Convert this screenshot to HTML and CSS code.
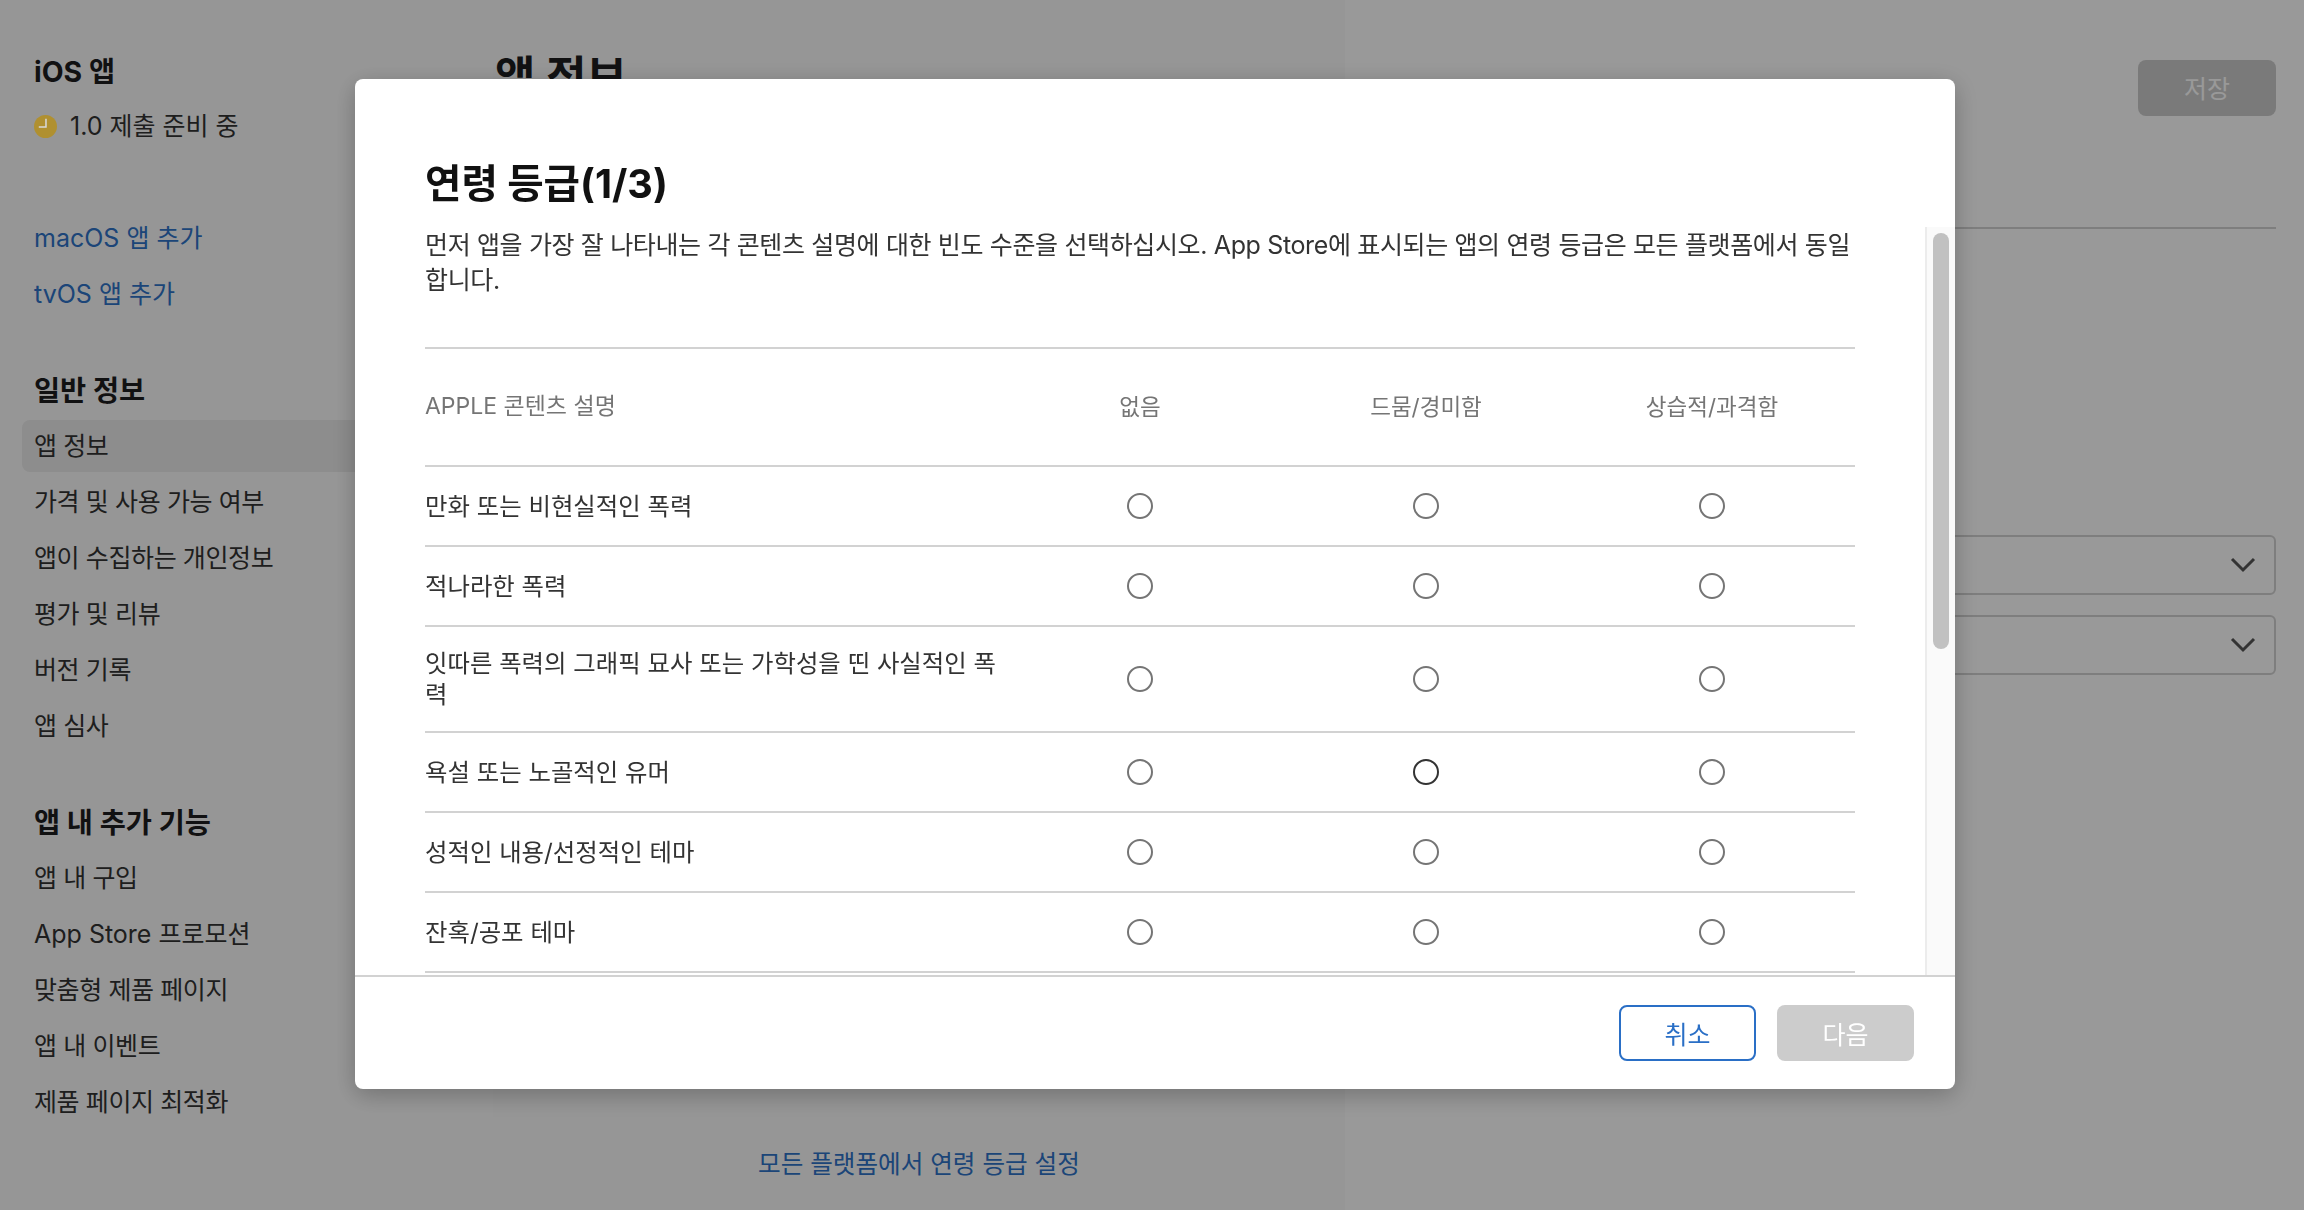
FILE: index.html
```html
<!DOCTYPE html>
<html lang="ko">
<head>
    <meta charset="UTF-8">
    <meta name="viewport" content="width=device-width, initial-scale=1.0">
    <title>앱 정보</title>
    <link rel="stylesheet" href="styles.css">
</head>
<body>
    <div class="page">
        <aside class="sidebar">
            <div class="app-block">
                <h2 class="side-title">iOS 앱</h2>
                <div class="status">
                    <svg class="status-icon" viewBox="0 0 24 24"><circle cx="12" cy="12" r="12" fill="#b09030"/><path d="M12.5 4v8.5H5" fill="none" stroke="#d8d8d8" stroke-width="1.6"/></svg>
                    <span>1.0 제출 준비 중</span>
                </div>
            </div>
            <div class="add-block">
                <a class="side-link" href="#">macOS 앱 추가</a>
                <a class="side-link" href="#">tvOS 앱 추가</a>
            </div>
            <h2 class="side-title section">일반 정보</h2>
            <a class="side-item active" href="#">앱 정보</a>
            <a class="side-item" href="#">가격 및 사용 가능 여부</a>
            <a class="side-item" href="#">앱이 수집하는 개인정보</a>
            <a class="side-item" href="#">평가 및 리뷰</a>
            <a class="side-item" href="#">버전 기록</a>
            <a class="side-item" href="#">앱 심사</a>
            <h2 class="side-title section second">앱 내 추가 기능</h2>
            <a class="side-item" href="#">앱 내 구입</a>
            <a class="side-item latin" href="#">App Store 프로모션</a>
            <a class="side-item" href="#">맞춤형 제품 페이지</a>
            <a class="side-item" href="#">앱 내 이벤트</a>
            <a class="side-item" href="#">제품 페이지 최적화</a>
        </aside>

        <main class="main">
            <div class="main-left">
                <h1 class="page-title">앱 정보</h1>
                <a class="rating-link" href="#">모든 플랫폼에서 연령 등급 설정</a>
            </div>
            <div class="main-right">
                <div class="save-row"><button class="save-btn">저장</button></div>
                <div class="select-box"><svg class="chevron" viewBox="0 0 26 16"><path d="M2 2l11 11L24 2" fill="none" stroke="#555" stroke-width="3"/></svg></div>
                <div class="select-box"><svg class="chevron" viewBox="0 0 26 16"><path d="M2 2l11 11L24 2" fill="none" stroke="#555" stroke-width="3"/></svg></div>
            </div>
        </main>
    </div>

    <div class="overlay">
        <div class="modal">
            <div class="modal-head">
                <h2>연령 등급(1/3)</h2>
            </div>
            <div class="modal-body">
                <div class="modal-content">
                    <p class="intro">먼저 앱을 가장 잘 나타내는 각 콘텐츠 설명에 대한 빈도 수준을 선택하십시오. App Store에 표시되는 앱의 연령 등급은 모든 플랫폼에서 동일합니다.</p>
                    <table class="rating-table">
                        <thead>
                            <tr>
                                <th>APPLE 콘텐츠 설명</th>
                                <th>없음</th>
                                <th>드뭄/경미함</th>
                                <th>상습적/과격함</th>
                            </tr>
                        </thead>
                        <tbody>
                            <tr>
                                <td>만화 또는 비현실적인 폭력</td>
                                <td><span class="radio"></span></td>
                                <td><span class="radio"></span></td>
                                <td><span class="radio"></span></td>
                            </tr>
                            <tr>
                                <td>적나라한 폭력</td>
                                <td><span class="radio"></span></td>
                                <td><span class="radio"></span></td>
                                <td><span class="radio"></span></td>
                            </tr>
                            <tr>
                                <td>잇따른 폭력의 그래픽 묘사 또는 가학성을 띤 사실적인 폭력</td>
                                <td><span class="radio"></span></td>
                                <td><span class="radio"></span></td>
                                <td><span class="radio"></span></td>
                            </tr>
                            <tr>
                                <td>욕설 또는 노골적인 유머</td>
                                <td><span class="radio"></span></td>
                                <td><span class="radio hover"></span></td>
                                <td><span class="radio"></span></td>
                            </tr>
                            <tr>
                                <td>성적인 내용/선정적인 테마</td>
                                <td><span class="radio"></span></td>
                                <td><span class="radio"></span></td>
                                <td><span class="radio"></span></td>
                            </tr>
                            <tr>
                                <td>잔혹/공포 테마</td>
                                <td><span class="radio"></span></td>
                                <td><span class="radio"></span></td>
                                <td><span class="radio"></span></td>
                            </tr>
                        </tbody>
                    </table>
                </div>
                <div class="scrollbar"><div class="scroll-thumb"></div></div>
            </div>
            <div class="modal-foot">
                <button class="btn btn-cancel">취소</button>
                <button class="btn btn-next">다음</button>
            </div>
        </div>
    </div>
</body>
</html>
```

FILE: styles.css
```css
* {
    margin: 0;
    padding: 0;
    box-sizing: border-box;
}

body {
    font-family: Inter, "Noto Sans CJK KR", sans-serif;
    background: #fff;
    color: #333;
    height: 1210px;
    overflow: hidden;
}

a {
    text-decoration: none;
}

button {
    font-family: inherit;
    border: none;
}

.page {
    display: flex;
    height: 100%;
}

.sidebar {
    width: 493px;
    flex-shrink: 0;
    padding: 52px 0 0 22px;
    background: #fbfbfb;
}

.side-title {
    font-size: 28.4px;
    line-height: 40px;
    font-weight: 700;
    color: #1d1d1f;
    padding-left: 12px;
}

.status {
    display: flex;
    align-items: center;
    gap: 13px;
    font-size: 25px;
    line-height: 36px;
    padding-left: 12px;
    margin-top: 16px;
}

/* sits above the dimming layer, its colour is not dimmed in the reference */
.status-icon {
    width: 23px;
    height: 23px;
    position: relative;
    z-index: 1;
}

.add-block {
    margin-top: 76px;
    display: flex;
    flex-direction: column;
    gap: 20px;
}

.side-link {
    font-size: 25px;
    line-height: 36px;
    color: #2f73c8;
    padding-left: 12px;
}

.section {
    margin-top: 59px;
    margin-bottom: 9px;
}

.section.second {
    margin-top: 51px;
    margin-bottom: 9px;
}

.side-item {
    display: block;
    height: 52px;
    margin-bottom: 4px;
    line-height: 52px;
    font-size: 25px;
    letter-spacing: -0.4px;
    color: #333;
    padding-left: 12px;
}

.side-item.latin {
    letter-spacing: 0;
}

.side-item.active {
    background: #ebebeb;
    border-radius: 8px 0 0 8px;
}

.main {
    flex: 1;
    display: flex;
}

.main-left {
    width: 852px;
    background: #fafafa;
    padding-left: 2px;
}

.page-title {
    font-size: 44px;
    line-height: 60px;
    margin-top: 47px;
    color: #1d1d1f;
}

.rating-link {
    display: block;
    margin-top: 1039px;
    margin-left: 263px;
    font-size: 24.6px;
    line-height: 36px;
    color: #2f73c8;
}

.main-right {
    flex: 1;
    padding: 60px 28px 0 0;
}

.save-row {
    display: flex;
    justify-content: flex-end;
    padding-bottom: 111px;
    border-bottom: 2px solid #d2d2d2;
}

.save-btn {
    width: 138px;
    height: 56px;
    padding-bottom: 2px;
    border-radius: 8px;
    background: #ccc;
    color: #fff;
    font-size: 25px;
}

.select-box {
    height: 60px;
    border: 2px solid #d2d2d2;
    border-radius: 6px;
    margin-top: 20px;
    display: flex;
    align-items: center;
    justify-content: flex-end;
    padding-right: 18px;
}

.main-right .select-box:nth-child(2) {
    margin-top: 306px;
}

.chevron {
    width: 26px;
    height: 16px;
}

.overlay {
    position: fixed;
    inset: 0;
    background: rgba(0, 0, 0, 0.4);
    display: flex;
    justify-content: center;
    align-items: flex-start;
    padding: 79px 0 0 6px;
}

.modal {
    width: 1600px;
    height: 1010px;
    background: #fff;
    border-radius: 8px;
    box-shadow: 0 6px 24px rgba(0, 0, 0, 0.25);
    display: flex;
    flex-direction: column;
    overflow: hidden;
}

.modal-head {
    height: 148px;
    padding: 0 70px;
    display: flex;
    align-items: center;
    flex-shrink: 0;
}

.modal-head h2 {
    font-size: 39.6px;
    font-weight: 700;
    color: #111;
    margin-top: 54px;
}

.modal-body {
    flex: 1;
    position: relative;
    overflow: hidden;
}

.modal-content {
    padding: 0 100px 0 70px;
}

.intro {
    font-size: 25px;
    letter-spacing: -0.36px;
    line-height: 35px;
    color: #333;
    padding: 1px 0 49px;
    word-break: break-all;
}

.rating-table {
    width: 100%;
    border-collapse: collapse;
    table-layout: fixed;
    font-size: 24.4px;
    line-height: 31px;
}

.rating-table th {
    height: 118px;
    padding-bottom: 2px;
    font-size: 22.5px;
    font-weight: 400;
    color: #757575;
    border-top: 2px solid #d2d2d2;
    border-bottom: 2px solid #d2d2d2;
    width: 20%;
}

.rating-table th:first-child {
    width: 40%;
    font-size: 23px;
    text-align: left;
}

.rating-table td {
    height: 80px;
    padding: 0;
    text-align: center;
    border-bottom: 2px solid #d2d2d2;
}

.rating-table td:first-child {
    text-align: left;
    padding: 21px 0;
    word-break: break-all;
}

.radio {
    display: block;
    width: 26px;
    height: 26px;
    margin: 0 auto;
    border: 2px solid #757575;
    border-radius: 50%;
}

.radio.hover {
    border-color: #333;
}

.scrollbar {
    position: absolute;
    top: 0;
    right: 0;
    bottom: 0;
    width: 30px;
    background: #fafafa;
    border-left: 2px solid #ececec;
    padding: 6px 6px 0 6px;
}

.scroll-thumb {
    height: 416px;
    background: #c1c1c1;
    border-radius: 8px;
}

.modal-foot {
    height: 114px;
    flex-shrink: 0;
    border-top: 2px solid #d2d2d2;
    display: flex;
    justify-content: flex-end;
    gap: 21px;
    padding: 28px 41px 0 0;
}

.btn {
    width: 137px;
    height: 56px;
    border-radius: 8px;
    font-size: 25px;
}

.btn-cancel {
    background: #fff;
    border: 2px solid #2a6fc6;
    color: #2a6fc6;
}

.btn-next {
    background: #ccc;
    color: #fff;
}
```
